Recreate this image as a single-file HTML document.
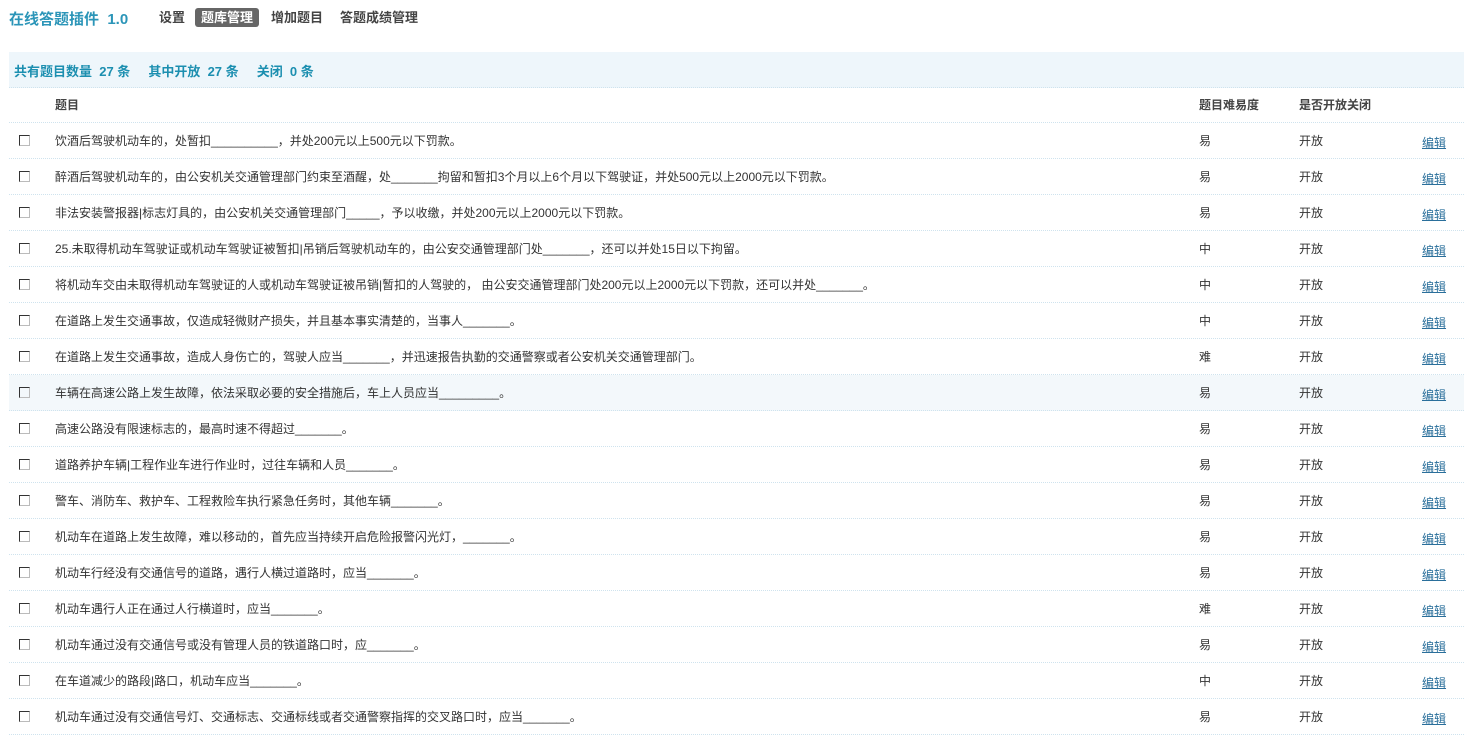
<!DOCTYPE html>
<html><head><meta charset="utf-8"><style>
body{margin:0;background:#fff;font-family:"Liberation Sans","Noto Sans CJK SC",sans-serif;font-size:12px;color:#333;width:1464px;height:745px;overflow:hidden;position:relative}
.title{position:absolute;left:9px;top:8px;font-size:15px;font-weight:bold;color:#2b95b8}
.nav{position:absolute;top:8px;font-size:13px;font-weight:bold;color:#444;line-height:19px}
.act{background:#666;color:#fff;border-radius:3px;padding:0 6px}
.sum{position:absolute;left:9px;top:52px;width:1455px;height:35px;background:#eef6fb;border-bottom:1px dotted #cfe3ee}
.sum span{position:absolute;left:5px;top:9px;font-weight:bold;color:#1c8fb0;font-size:13px}
.row{position:absolute;left:9px;width:1455px;height:35px;border-bottom:1px dotted #cfe3ee}
.row div{position:absolute;top:9px;white-space:nowrap}
.cb{left:10px!important;top:12px!important;width:9px;height:9px;border:1px solid #333;border-right-color:#bbb;border-bottom-color:#bbb}
.q{left:46px}.d{left:1190px}.s{left:1290px}.e{left:1413px;color:#2a6f9b;text-decoration:underline}
.hd div{font-weight:bold;color:#444}
</style></head><body>
<div class="title">在线答题插件&nbsp; 1.0</div>
<div class="nav" style="left:159px">设置</div>
<div class="nav act" style="left:195px">题库管理</div>
<div class="nav" style="left:271px">增加题目</div>
<div class="nav" style="left:340px">答题成绩管理</div>
<div class="sum"><span>共有题目数量&nbsp; 27 条&nbsp;&nbsp;&nbsp;&nbsp; 其中开放&nbsp; 27 条&nbsp;&nbsp;&nbsp;&nbsp; 关闭&nbsp; 0 条</span></div>
<div class="row hd" style="top:87px"><div class="q">题目</div><div class="d">题目难易度</div><div class="s">是否开放关闭</div></div>
<div id="rows"></div>
<script>
var q=[["饮酒后驾驶机动车的，处暂扣__________，并处200元以上500元以下罚款。","易"],
["醉酒后驾驶机动车的，由公安机关交通管理部门约束至酒醒，处_______拘留和暂扣3个月以上6个月以下驾驶证，并处500元以上2000元以下罚款。","易"],
["非法安装警报器|标志灯具的，由公安机关交通管理部门_____，予以收缴，并处200元以上2000元以下罚款。","易"],
["25.未取得机动车驾驶证或机动车驾驶证被暂扣|吊销后驾驶机动车的，由公安交通管理部门处_______，还可以并处15日以下拘留。","中"],
["将机动车交由未取得机动车驾驶证的人或机动车驾驶证被吊销|暂扣的人驾驶的， 由公安交通管理部门处200元以上2000元以下罚款，还可以并处_______。","中"],
["在道路上发生交通事故，仅造成轻微财产损失，并且基本事实清楚的，当事人_______。","中"],
["在道路上发生交通事故，造成人身伤亡的，驾驶人应当_______，并迅速报告执勤的交通警察或者公安机关交通管理部门。","难"],
["车辆在高速公路上发生故障，依法采取必要的安全措施后，车上人员应当_________。","易"],
["高速公路没有限速标志的，最高时速不得超过_______。","易"],
["道路养护车辆|工程作业车进行作业时，过往车辆和人员_______。","易"],
["警车、消防车、救护车、工程救险车执行紧急任务时，其他车辆_______。","易"],
["机动车在道路上发生故障，难以移动的，首先应当持续开启危险报警闪光灯，_______。","易"],
["机动车行经没有交通信号的道路，遇行人横过道路时，应当_______。","易"],
["机动车遇行人正在通过人行横道时，应当_______。","难"],
["机动车通过没有交通信号或没有管理人员的铁道路口时，应_______。","易"],
["在车道减少的路段|路口，机动车应当_______。","中"],
["机动车通过没有交通信号灯、交通标志、交通标线或者交通警察指挥的交叉路口时，应当_______。","易"]];
var h="";q.forEach(function(r,i){h+='<div class="row" style="top:'+(123+i*36)+'px;'+(i==7?'background:#f3f8fb':'')+'"><div class="cb"></div><div class="q">'+r[0]+'</div><div class="d">'+r[1]+'</div><div class="s">开放</div><div class="e" style="top:11px">编辑</div></div>'});
document.getElementById("rows").innerHTML=h;
</script>
</body></html>
